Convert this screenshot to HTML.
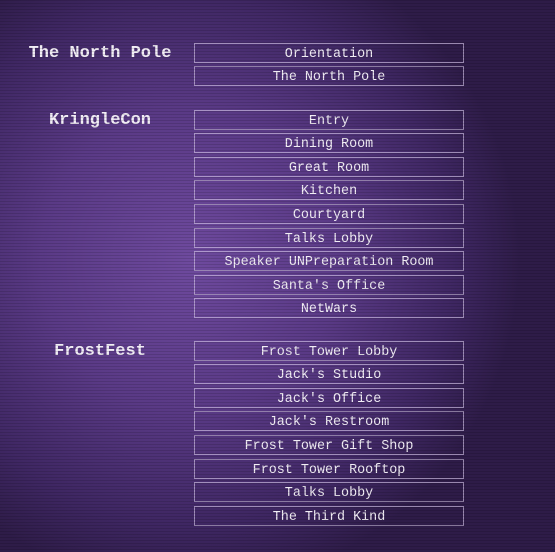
<!DOCTYPE html>
<html><head><style>
html,body{margin:0;padding:0}
body{width:555px;height:552px;overflow:hidden;position:relative;
background:radial-gradient(ellipse 330px 330px at 190px 260px,#6e4a9e 0%,#5a3a86 45%,#3f2763 80%,#2e1c48 100%);
font-family:"Liberation Mono",monospace;color:#f2eef6}
body:after{content:"";position:absolute;inset:0;background:repeating-linear-gradient(180deg,rgba(0,0,0,0.13) 0 1px,rgba(0,0,0,0) 1px 3px);pointer-events:none}
.h{position:absolute;width:200px;left:0;text-align:center;font-weight:bold;font-size:17px;line-height:20px}
.b{position:absolute;left:194px;width:268px;height:18px;border:1px solid rgba(210,195,230,0.65);text-align:center;font-size:13.4px;line-height:21px}
</style></head><body>
<div class="h" style="top:44px">The North Pole</div>
<div class="h" style="top:111px">KringleCon</div>
<div class="h" style="top:342px;left:0">FrostFest</div>
<div class="b" style="top:43px">Orientation</div>
<div class="b" style="top:66px">The North Pole</div>
<div class="b" style="top:110px">Entry</div>
<div class="b" style="top:133px">Dining Room</div>
<div class="b" style="top:157px">Great Room</div>
<div class="b" style="top:180px">Kitchen</div>
<div class="b" style="top:204px">Courtyard</div>
<div class="b" style="top:228px">Talks Lobby</div>
<div class="b" style="top:251px">Speaker UNPreparation Room</div>
<div class="b" style="top:275px">Santa's Office</div>
<div class="b" style="top:298px">NetWars</div>
<div class="b" style="top:341px">Frost Tower Lobby</div>
<div class="b" style="top:364px">Jack's Studio</div>
<div class="b" style="top:388px">Jack's Office</div>
<div class="b" style="top:411px">Jack's Restroom</div>
<div class="b" style="top:435px">Frost Tower Gift Shop</div>
<div class="b" style="top:459px">Frost Tower Rooftop</div>
<div class="b" style="top:482px">Talks Lobby</div>
<div class="b" style="top:506px">The Third Kind</div>
</body></html>
